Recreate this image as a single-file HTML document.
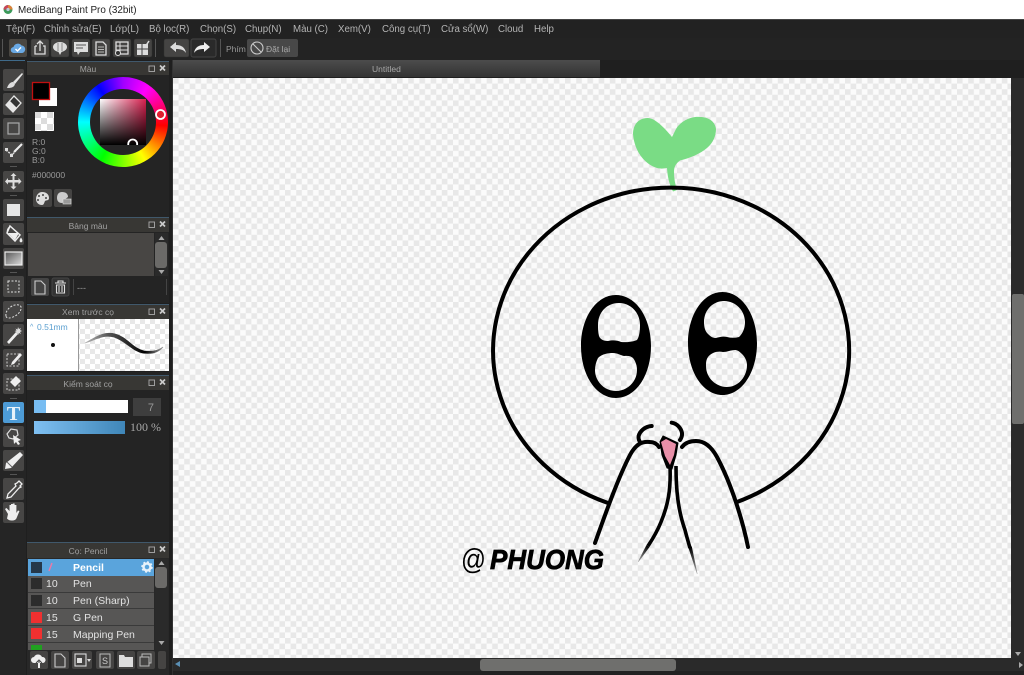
<!DOCTYPE html>
<html><head><meta charset="utf-8"><style>
html,body{margin:0;padding:0;background:#1f1f1f;width:1024px;height:675px;overflow:hidden}
svg{display:block;position:absolute;left:0;top:0}
text{font-family:"Liberation Sans",sans-serif}
.m{font-size:9.7px;fill:#b4b4b4}
.h{font-size:8.500px;fill:#a0a0a0;text-anchor:middle}
.s{font-size:8.500px;fill:#9a9a9a}
.b{fill:#454443;stroke:#333;stroke-width:.5}
.r{font-size:10.500px;fill:#e2e2e2}
.i{fill:#ddd}
.o{fill:none;stroke:#ddd;stroke-width:1.300}
.k{fill:none;stroke:#000;stroke-width:4;stroke-linecap:round;stroke-linejoin:round}
</style></head><body>
<svg width="1024" height="675" viewBox="0 0 1024 675" xmlns="http://www.w3.org/2000/svg">
<defs>
<pattern id="ch" width="11.200" height="11.200" patternUnits="userSpaceOnUse" x="173" y="78">
<rect width="11.200" height="11.200" fill="#fbfbfb"/><rect width="5.600" height="5.600" fill="#e8e8e8"/><rect x="5.600" y="5.600" width="5.600" height="5.600" fill="#e8e8e8"/></pattern>
<pattern id="c2" width="10" height="10" patternUnits="userSpaceOnUse" x="80" y="319">
<rect width="10" height="10" fill="#fff"/><rect width="5" height="5" fill="#e8e8e8"/><rect x="5" y="5" width="5" height="5" fill="#e8e8e8"/></pattern>
<pattern id="c3" width="12" height="12" patternUnits="userSpaceOnUse" x="35" y="112">
<rect width="12" height="12" fill="#fff"/><rect width="6" height="6" fill="#dcdcdc"/><rect x="6" y="6" width="6" height="6" fill="#dcdcdc"/></pattern>
<linearGradient id="tab" x1="0" y1="0" x2="0" y2="1"><stop offset="0" stop-color="#4c4c4c"/><stop offset="1" stop-color="#333"/></linearGradient>
<linearGradient id="sl" x1="0" y1="0" x2="1" y2="0"><stop offset="0" stop-color="#7fc0f2"/><stop offset="1" stop-color="#3f86b8"/></linearGradient>
<linearGradient id="sw" x1="0" y1="0" x2="1" y2="0"><stop offset="0" stop-color="#fff"/><stop offset="1" stop-color="#d8204f"/></linearGradient>
<linearGradient id="sb" x1="0" y1="0" x2="0" y2="1"><stop offset="0" stop-color="#000" stop-opacity="0"/><stop offset="1" stop-color="#000"/></linearGradient>
<linearGradient id="gr" x1="0" y1="0" x2="1" y2="1"><stop offset="0" stop-color="#555"/><stop offset="1" stop-color="#ddd"/></linearGradient>
<linearGradient id="t1" gradientUnits="userSpaceOnUse" x1="648" y1="546" x2="638" y2="562"><stop offset="0" stop-color="#000"/><stop offset="1" stop-color="#aaa"/></linearGradient>
<linearGradient id="t2" gradientUnits="userSpaceOnUse" x1="690" y1="548" x2="697" y2="574"><stop offset="0" stop-color="#000"/><stop offset="1" stop-color="#aaa"/></linearGradient>
<linearGradient id="br" gradientUnits="userSpaceOnUse" x1="84" y1="0" x2="165" y2="0"><stop offset="0" stop-color="#bbb"/><stop offset=".3" stop-color="#555"/><stop offset=".75" stop-color="#000"/><stop offset="1" stop-color="#aaa"/></linearGradient>
<clipPath id="sq"><rect x="100" y="99" width="46" height="46"/></clipPath>
</defs>

<!-- base -->
<rect width="1024" height="675" fill="#1f1f1f"/>
<rect width="1024" height="19" fill="#fff"/>
<circle cx="8" cy="9.500" r="4.500" fill="#3c9a5a"/><path d="M8 5a4.500 4.500 0 0 1 4.500 4.500H8z" fill="#e0803a"/><path d="M3.500 9.500A4.500 4.500 0 0 1 8 5v4.500z" fill="#c9455a"/><circle cx="8" cy="9.500" r="1.600" fill="#bcd"/>
<text x="18" y="13" font-size="9.900" fill="#222">MediBang Paint Pro (32bit)</text>

<!-- menu -->
<rect y="19" width="1024" height="19" fill="#222"/>
<rect y="19" width="1024" height="1" fill="#444"/>
<text class="m" x="6" y="32">Tệp(F)</text>
<text class="m" x="44" y="32">Chỉnh sửa(E)</text>
<text class="m" x="110" y="32">Lớp(L)</text>
<text class="m" x="149" y="32">Bộ lọc(R)</text>
<text class="m" x="200" y="32">Chọn(S)</text>
<text class="m" x="245" y="32">Chụp(N)</text>
<text class="m" x="293" y="32">Màu (C)</text>
<text class="m" x="338" y="32">Xem(V)</text>
<text class="m" x="382" y="32">Công cụ(T)</text>
<text class="m" x="441" y="32">Cửa sổ(W)</text>
<text class="m" x="498" y="32">Cloud</text>
<text class="m" x="534" y="32">Help</text>

<!-- toolbar -->
<rect y="38" width="1024" height="22" fill="#232323"/>
<rect x="2" y="39" width="1" height="18" fill="#555"/>
<rect x="9" y="39" width="18" height="18" rx="2" fill="#4a4742"/>
<rect x="31" y="39" width="18" height="18" rx="2" class="b"/>
<rect x="51" y="39" width="18" height="18" rx="2" class="b"/>
<rect x="72" y="39" width="18" height="18" rx="2" class="b"/>
<rect x="92" y="39" width="18" height="18" rx="2" class="b"/>
<rect x="113" y="39" width="18" height="18" rx="2" class="b"/>
<rect x="134" y="39" width="18" height="18" rx="2" class="b"/>
<rect x="155" y="39" width="1" height="18" fill="#555"/>
<rect x="164" y="39" width="25" height="18" rx="2" class="b"/>
<rect x="191" y="39" width="25" height="18" rx="2" fill="#2a2a2a" stroke="#444"/>
<rect x="220" y="39" width="1" height="18" fill="#555"/>
<text x="226" y="52" font-size="8.500" fill="#999">Phím</text>
<rect x="247" y="39" width="51" height="18" rx="2" fill="#484848"/>
<circle cx="257" cy="48" r="6" fill="none" stroke="#ccc" stroke-width="1.100"/><path d="M253 44l8 8" stroke="#ccc" stroke-width="1.100"/>
<text x="266" y="52" font-size="8.500" fill="#aaa">Đặt lại</text>
<!-- cloud -->
<path d="M14 53a3 3 0 0 1-.5-6 4.500 4.500 0 0 1 8-1.500 3.800 3.800 0 0 1 .8 7.500z" fill="#6aa9e4"/><path d="M15.500 49l2 2 3.500-3.600" fill="none" stroke="#fff" stroke-width="1.400"/>
<!-- share -->
<path d="M35 46v8h10v-8h-2M35 46h2" class="o"/><path d="M40 51v-9M37 44l3-3 3 3" class="o"/>
<!-- balloon -->
<ellipse cx="60" cy="47" rx="7" ry="5" class="i"/><path d="M58 51l2 4 2-4z" class="i"/><path d="M58 43v8M62 43v8" stroke="#666" stroke-width=".7"/>
<!-- comment -->
<path d="M74 42h14v10h-8l-2 3-1-3h-3z" class="i"/><path d="M76 45h10M76 48h7" stroke="#555"/>
<!-- page -->
<path d="M96 42h7l3 3v10H96z" class="o"/><path d="M98 47h6M98 49.500h6M98 52h6" stroke="#ddd" stroke-width=".8"/>
<!-- list -->
<rect x="116" y="42" width="12" height="12" class="o"/><path d="M116 46h12M116 50h12M120 42v12" stroke="#ddd"/>
<circle cx="118" cy="53" r="2.500" fill="#333" stroke="#ddd"/>
<!-- table check -->
<rect x="137" y="44" width="11" height="11" class="i"/><path d="M137 49h11M142 44v11" stroke="#444"/><path d="M145 47l4-6" stroke="#ddd" stroke-width="1.500"/>
<!-- undo redo -->
<path d="M170 47l6-5v3c5 0 9 2 10 8-2-3-5-4-10-4v3z" fill="#ddd"/>
<path d="M210 47l-6-5v3c-5 0-9 2-10 8 2-3 5-4 10-4v3z" fill="#eee"/>

<!-- tab bar -->
<rect x="173" y="60" width="427" height="17" fill="url(#tab)"/>
<text x="372" y="72" font-size="8.500" fill="#a8a8a8">Untitled</text>
<rect x="0" y="60" width="25" height="1" fill="#3f6a8a"/>

<!-- canvas -->
<rect x="173" y="78" width="838" height="580" fill="url(#ch)"/>
<rect x="172" y="60" width="1" height="615" fill="#333"/>

<!-- artwork -->
<path d="M672 137C667 131 656 118 648 118C638 118 633 125 633 134C634 148 642 163 657 168C661 169 664 168.500 667 168C667.500 176 669 184 673 191.500L677 190C675 184 674 178 674 172C674 168 675 164 680 160.500C690 158 700 154 707 148C713 143 716 136 716 129C715 121 708 117 700 117C690 116 680 122 676 129Z" fill="#7adc85"/>
<path class="k" d="M608 503A178 163 0 1 1 737 502"/>
<path fill-rule="evenodd" d="M616 295C636 295 651 318 651 346C651 375 636 398 616 398C596 398 581 375 581 346C581 318 596 295 616 295ZM619 303C607 303 598 312 598 325C598 329 598 332 599 336C600 339 603 341 608 341C612 340 617 340 621 342C626 342.500 632 342 637 340C639 337 640 332 640 325C640 313 631 303 619 303ZM598 358C596 362 595 366 595 370C595 381 604 391 616 391C627 391 637 382 637 370C637 366 636 362 633 358C631 356 628 355.500 624 356C620 355 617 353 613 353C608 353 602 354 598 358Z" fill="#000"/>
<path fill-rule="evenodd" d="M722.500 292C742 292 757 315 757 343C757 372 742 395 722.500 395C703 395 688 372 688 343C688 315 703 292 722.500 292ZM724 301C713 301 704 310 704 322C704 327 705 331 708 334C711 337 713 338 716 338C719 337 723 336 727 337C731 338 735 338 739 337C743 333 745 328 745 322C745 311 736 301 724 301ZM708 357C706 360 706 363 706 366C706 378 716 387 727 387C738 387 747 377 747 365C747 361 745 357 742 354C739 351 737 350 735 350C731 350 727 352 723 352C718 351 712 352 708 357Z" fill="#000"/>
<path d="M595 543C605 515 618 478 630 455C636 444 642 441 650 442C654 442 657 444 659 447" class="k"/>
<path d="M748 547C743 522 732 485 717 457C711 446 704 441 696 441C689 441 685 443 682 447" class="k"/>
<path d="M670 466C671 490 668 505 661 522C657 532 652 540 648 546" fill="none" stroke="#000" stroke-width="3.600"/>
<path d="M646.500 545L649.500 547L638.500 562L638 561.500Z" fill="url(#t1)"/>
<path d="M676 466C676 490 678 510 685 530C686.500 536 688 541 690 548" fill="none" stroke="#000" stroke-width="3.600"/>
<path d="M688.200 547L691.800 546.500L697.500 574L697 574Z" fill="url(#t2)"/>
<path d="M651.700 426C645 426.500 640 431 638.600 436C638.300 439 639 441 640.700 442.700M671.700 422.700C677 423.500 681 428 682 433C682.300 436 681.500 438 680 440" class="k" stroke-width="3"/>
<path d="M660 441.700L663 436L678 443L676 455L672 469L667 468L662 455Z" fill="#000" stroke="#000" stroke-linejoin="round"/>
<path d="M661 442L666 439L676 444L674 455L670 465L665 456Z" fill="#e88fa8"/>
<text x="461" y="569" font-size="29" fill="#000" textLength="25" lengthAdjust="spacingAndGlyphs">@</text>
<text x="490" y="569" font-size="28" font-weight="bold" font-style="italic" fill="#000" stroke="#000" stroke-width=".8" textLength="114" lengthAdjust="spacingAndGlyphs">PHUONG</text>

<!-- canvas scrollbars -->
<rect x="1011" y="78" width="13" height="597" fill="#2b2b2b"/>
<rect x="1012" y="294" width="12" height="130" rx="2" fill="#6f6f6d"/>
<rect x="173" y="658" width="851" height="13" fill="#2a2a2a"/>
<rect x="173" y="671" width="851" height="4" fill="#222"/>
<rect x="480" y="659" width="196" height="12" rx="3" fill="#6f6f6d"/>
<path d="M175 664l5-3v6z" fill="#5a8fb4"/><path d="M1015 652h6l-3 4z" fill="#aaa"/><path d="M1019 662l4 3-4 3z" fill="#aaa"/>

<!-- left tools -->
<rect x="0" y="61" width="26" height="614" fill="#252525"/>
<g fill="#474645">
<rect x="3" y="69" width="21" height="22" rx="2"/><rect x="3" y="93" width="21" height="22" rx="2"/><rect x="3" y="118" width="21" height="21" rx="2"/><rect x="3" y="142" width="21" height="21" rx="2"/><rect x="3" y="171" width="21" height="21" rx="2"/><rect x="3" y="199" width="21" height="22" rx="2"/><rect x="3" y="223" width="21" height="22" rx="2"/><rect x="3" y="248" width="21" height="21" rx="2"/><rect x="3" y="276" width="21" height="21" rx="2"/><rect x="3" y="301" width="21" height="21" rx="2"/><rect x="3" y="324" width="21" height="22" rx="2"/><rect x="3" y="349" width="21" height="21" rx="2"/><rect x="3" y="373" width="21" height="21" rx="2"/><rect x="3" y="426" width="21" height="21" rx="2"/><rect x="3" y="450" width="21" height="21" rx="2"/><rect x="3" y="478" width="21" height="22" rx="2"/><rect x="3" y="502" width="21" height="21" rx="2"/>
</g>
<rect x="3" y="402" width="21" height="21" rx="2" fill="#4d9bd6"/>
<g fill="#555"><rect x="10" y="166" width="7" height="1"/><rect x="10" y="195" width="7" height="1"/><rect x="10" y="272" width="7" height="1"/><rect x="10" y="398" width="7" height="1"/><rect x="10" y="474" width="7" height="1"/></g>
<!-- brush -->
<path d="M22 73l-9 9 2 2 8-10z" fill="#e6e6e6"/><path d="M13 82c-3 0-5 3-6 6 3 0 7 0 8-4z" fill="#ddd"/>
<!-- eraser -->
<path d="M14 96l7 7-8 9-7-7z" fill="#333" stroke="#e6e6e6" stroke-width="1.300"/><path d="M6 105l4-4 7 7-4 4z" fill="#e6e6e6"/>
<!-- square -->
<rect x="8" y="123" width="11" height="11" fill="none" stroke="#aaa" stroke-width="1.200"/>
<!-- line -->
<path d="M6 150l6 5 9-10" fill="none" stroke="#ddd" stroke-width="1.500" stroke-dasharray="2 1"/><path d="M14 152l8-8" stroke="#eee" stroke-width="2"/><rect x="5" y="148" width="3" height="3" class="i"/><rect x="10" y="154" width="3" height="3" class="i"/>
<!-- move -->
<path d="M13.500 173l3 3h-2v4h4v-2l3 3.500-3 3v-2h-4v4h2l-3 3-3-3h2v-4H8v2l-3-3 3-3.500v2h4.500v-4h-2z" fill="#ddd"/>
<!-- fill rect -->
<rect x="7" y="204" width="13" height="12" fill="#e6e6e6"/>
<!-- bucket -->
<path d="M10 226l10 9-5 6-8-8z" fill="none" stroke="#eee" stroke-width="1.500"/><path d="M8 233h11l-4 7z" fill="#eee"/><path d="M21 238c1.500 2 1.500 4 0 4s-1.500-2 0-4zM7 232c0-3 1-5 4-6" fill="#eee" stroke="#eee" stroke-width=".6"/>
<!-- gradient -->
<rect x="5" y="252" width="17" height="13" fill="url(#gr)" stroke="#eee" stroke-width="1.200"/>
<!-- marquee -->
<rect x="8" y="281" width="11" height="11" fill="none" stroke="#ddd" stroke-dasharray="2 1.500"/>
<!-- lasso -->
<path d="M6 316c-1-5 4-10 9-11 4-1 7 1 6 4-1 5-8 9-12 9-2 0-3-1-3-2z" fill="none" stroke="#ddd" stroke-dasharray="2 1.500"/>
<!-- wand -->
<path d="M7 342l9-10 2 2-9 10z" fill="#eee"/><path d="M18 327l1 2 2-1-1 2 2 1-2 1 1 2-2-1-1 2-.5-2-2 1 1-2-2-1 2-.5-1-2 2 1z" fill="#ddd"/>
<!-- select pen -->
<rect x="7" y="354" width="12" height="12" fill="none" stroke="#ccc" stroke-dasharray="2 1.500"/><path d="M12 362l8-9 2 2-8 9-3 1z" fill="#eee"/>
<!-- select eraser -->
<rect x="7" y="379" width="12" height="11" fill="none" stroke="#ccc" stroke-dasharray="2 1.500"/><path d="M16 376l5 5-6 6-5-5z" fill="#eee"/>
<!-- T -->
<text x="13.500" y="420" font-size="20" font-weight="bold" fill="#e8f2fa" text-anchor="middle" style="font-family:'Liberation Serif',serif">T</text>
<!-- polygon select -->
<path d="M7 434l4-5 6 1 1 5-5 4-4-1z" fill="none" stroke="#ddd" stroke-width="1.200"/><path d="M13 435l8 5-3 1 2 3-2 1-2-3-2 2z" fill="#eee"/>
<!-- correction pen -->
<path d="M20 452l3 3-12 13-6 1 1-6z" fill="#eee"/><path d="M7 462l5 5" stroke="#666"/>
<!-- dropper -->
<path d="M19 481l3 3-2 2 1 1-2 1-8 9-4 1 1-4 8-8-1-2 2-1z" fill="none" stroke="#eee" stroke-width="1.300"/>
<!-- hand -->
<path d="M8 514l-3-5 1.500-1 3 3V505h1.500v5V504h1.800v6-6.500h1.800v7-5.500h1.800v8l1.500-2.500 1.600.5-2.500 6c-1 3-2.500 3.500-5 3.500-2.500 0-3.500-.5-5-2z" fill="#eee"/>

<!-- panel Mau -->
<rect x="27" y="61" width="142" height="156" fill="#242424"/>
<rect x="27" y="62" width="142" height="13" fill="#383734"/>
<rect x="27" y="61" width="142" height="1" fill="#40586b"/>
<text class="h" x="88" y="72">Màu</text>
<g id="pi"><rect x="149" y="66" width="5.500" height="5.500" fill="none" stroke="#aaa" stroke-width=".9"/><path d="M160 65.500l5 5M165 65.500l-5 5" stroke="#ccc" stroke-width="1.700"/></g>
<rect x="39" y="88" width="18" height="18" fill="#fff"/>
<rect x="32.500" y="82.500" width="17" height="17" fill="#000" stroke="#c01010" stroke-width="1.300"/>
<rect x="35" y="112" width="19" height="19" fill="url(#c3)"/>
<text class="s" x="32" y="145">R:0</text><text class="s" x="32" y="154">G:0</text><text class="s" x="32" y="163">B:0</text>
<text class="s" x="32" y="178">#000000</text>
<foreignObject x="78" y="77" width="90" height="90"><div xmlns="http://www.w3.org/1999/xhtml" style="width:90px;height:90px;border-radius:50%;background:conic-gradient(#a000ff 0deg,#ff00ff 35deg,#ff0040 80deg,#ff0000 95deg,#ffff00 150deg,#00ff00 210deg,#00ffff 270deg,#0000ff 325deg,#a000ff 360deg)"></div></foreignObject>
<circle cx="123" cy="122" r="33" fill="#242424"/>
<rect x="100" y="99" width="46" height="46" fill="url(#sw)"/>
<rect x="100" y="99" width="46" height="46" fill="url(#sb)"/>
<circle cx="132.700" cy="144" r="4.500" fill="none" stroke="#fff" stroke-width="1.800" clip-path="url(#sq)"/>
<circle cx="160.500" cy="114.500" r="4.500" fill="#e02030" stroke="#fff" stroke-width="1.800"/>
<rect x="33" y="189" width="19" height="18" rx="2" fill="#454443"/><rect x="54" y="189" width="18" height="18" rx="2" fill="#454443"/>
<path d="M42 192c5 0 7 3 7 6 0 3-3 2-4 3-1 2-1 4-3 4-4 0-6-3-6-6 0-4 3-7 6-7z" fill="#ddd"/><circle cx="39" cy="196" r="1" fill="#444"/><circle cx="43" cy="195" r="1" fill="#444"/><circle cx="46" cy="198" r="1" fill="#444"/><circle cx="38" cy="200" r="1" fill="#444"/>
<path d="M62 192c4 0 6 2 6 5l-4 3c-1 2-1 3-2 3-4 0-5-3-5-5 0-4 2-6 5-6z" fill="#ccc"/><rect x="63" y="199" width="8" height="5" fill="#999" stroke="#ddd" stroke-width=".6"/>

<!-- panel Bang mau -->
<rect x="27" y="218" width="142" height="85" fill="#242424"/>
<rect x="27" y="218" width="142" height="14" fill="#383734"/>
<rect x="27" y="217" width="142" height="1" fill="#40586b"/>
<text class="h" x="88" y="229">Bảng màu</text>
<use href="#pi" y="156"/>
<rect x="28" y="233" width="126" height="43" fill="#484644"/>
<rect x="155" y="233" width="13" height="43" fill="#2a2a2a"/>
<rect x="155" y="242" width="12" height="26" rx="3" fill="#6b6a68"/>
<path d="M158.500 240l3-4 3 4zM158.500 270l3 4 3-4z" fill="#aaa"/>
<rect x="31" y="278" width="18" height="18" rx="2" fill="#444"/><rect x="52" y="278" width="17" height="18" rx="2" fill="#333" stroke="#444"/>
<path d="M35 281h6l4 4v9H35z" fill="none" stroke="#ccc" stroke-width="1.100"/>
<path d="M55 283h11M58 283v-2h5v2M56.500 285h8v8h-8zM59 286v6M62 286v6" fill="none" stroke="#ddd" stroke-width="1.100"/>
<rect x="73" y="279" width="1" height="16" fill="#444"/>
<text x="77" y="291" font-size="9" fill="#999">---</text>
<rect x="166" y="279" width="1" height="16" fill="#444"/>

<!-- Preview -->
<rect x="27" y="304" width="142" height="15" fill="#383734"/>
<rect x="27" y="304" width="142" height="1" fill="#40586b"/>
<text class="h" x="88" y="315">Xem trước cọ</text>
<use href="#pi" y="243"/>
<rect x="27" y="319" width="51" height="52" fill="#fff"/>
<rect x="78" y="319" width="1" height="52" fill="#999"/>
<rect x="79" y="319" width="90" height="52" fill="url(#c2)"/>
<text x="30" y="329" font-size="7" fill="#5a9fd0">^</text>
<text x="37" y="330" font-size="8.500" fill="#5a9fd0">0.51mm</text>
<circle cx="53" cy="345" r="2" fill="#111"/>
<path d="M85 343C95 338 103 331 115 334C127 337 133 349 144 351C152 352 158 351 163 347C158 353 150 354 143 353C132 351 126 341 114 337C103 334 95 340 85 343Z" fill="url(#br)" stroke="url(#br)" stroke-width=".8"/>

<!-- Brush control -->
<rect x="27" y="372" width="142" height="170" fill="#242424"/>
<rect x="27" y="376" width="142" height="14" fill="#383734"/>
<rect x="27" y="375" width="142" height="1" fill="#40586b"/>
<text class="h" x="88" y="387">Kiểm soát cọ</text>
<use href="#pi" y="314"/>
<rect x="34" y="400" width="94" height="13" fill="#fff"/>
<rect x="34" y="400" width="12" height="13" fill="#78bdf2"/>
<rect x="133" y="398" width="28" height="18" fill="#3e3e3e"/>
<text x="154" y="411" font-size="11" fill="#999" text-anchor="end">7</text>
<rect x="34" y="421" width="91" height="13" fill="url(#sl)"/>
<text x="130" y="431" font-size="12" fill="#a8a8a8" style="font-family:'Liberation Serif',serif">100 %</text>

<!-- Brush panel -->
<rect x="27" y="543" width="142" height="132" fill="#282828"/>
<rect x="27" y="543" width="142" height="15" fill="#383734"/>
<rect x="27" y="542" width="142" height="1" fill="#40586b"/>
<text class="h" x="88" y="554">Cọ: Pencil</text>
<use href="#pi" y="481"/>
<rect x="28" y="559" width="126" height="91" fill="#575655"/>
<rect x="28" y="559" width="126" height="17" fill="#5aa4dc"/>
<g fill="#3a3a3a"><rect x="28" y="592" width="126" height="1"/><rect x="28" y="608" width="126" height="1"/><rect x="28" y="625" width="126" height="1"/><rect x="28" y="642" width="126" height="1"/></g>
<rect x="31" y="562" width="11" height="11" fill="#25384a"/>
<rect x="31" y="578" width="11" height="11" fill="#2c2c2c"/>
<rect x="31" y="595" width="11" height="11" fill="#2c2c2c"/>
<rect x="31" y="612" width="11" height="11" fill="#f03030"/>
<rect x="31" y="628" width="11" height="11" fill="#f03030"/>
<rect x="31" y="645" width="11" height="5" fill="#20a020"/>
<path d="M49 571l3-8" stroke="#e87aa8" stroke-width="1.500"/>
<text x="73" y="571" font-size="10.500" font-weight="bold" fill="#fff">Pencil</text>
<text class="r" x="46" y="587">10</text><text class="r" x="73" y="587">Pen</text>
<text class="r" x="46" y="604">10</text><text class="r" x="73" y="604">Pen (Sharp)</text>
<text class="r" x="46" y="621">15</text><text class="r" x="73" y="621">G Pen</text>
<text class="r" x="46" y="638">15</text><text class="r" x="73" y="638">Mapping Pen</text>
<circle cx="147" cy="567" r="3.500" fill="none" stroke="#e8f2fa" stroke-width="2.500"/><circle cx="147" cy="567" r="5" fill="none" stroke="#e8f2fa" stroke-width="1.500" stroke-dasharray="2 1.900"/>
<rect x="155" y="559" width="13" height="91" fill="#2a2a2a"/>
<rect x="155" y="567" width="12" height="21" rx="3" fill="#6b6a68"/>
<path d="M158.500 565l3-4 3 4zM158.500 641l3 4 3-4z" fill="#aaa"/>
<g fill="#454443"><rect x="30" y="651" width="18" height="18" rx="2"/><rect x="51" y="651" width="18" height="18" rx="2"/><rect x="72" y="651" width="20" height="18" rx="2"/><rect x="96" y="651" width="18" height="18" rx="2"/><rect x="117" y="651" width="18" height="18" rx="2"/><rect x="137" y="651" width="18" height="18" rx="2"/><rect x="158" y="651" width="8" height="18" rx="2"/></g>
<path d="M34 663a3 3 0 0 1 0-6 4.500 4.500 0 0 1 8 0 3 3 0 0 1 1 6z" fill="#eee"/><path d="M39 668v-7M36 663l3-3 3 3" stroke="#444" fill="none"/><path d="M39 668v-5" stroke="#eee" stroke-width="2"/>
<path d="M55 654h6l4 4v9H55z" fill="none" stroke="#ccc" stroke-width="1.100"/>
<rect x="75" y="654" width="11" height="12" fill="none" stroke="#ddd" stroke-width="1.100"/><rect x="77" y="658" width="5" height="5" fill="#ddd"/><path d="M87 659h4l-2 3z" fill="#ddd"/>
<rect x="100" y="654" width="10" height="13" fill="none" stroke="#bbb"/><text x="105" y="664" font-size="9" fill="#ccc" text-anchor="middle">S</text>
<path d="M119 655h5l1 2h8v10h-14z" fill="#ddd"/>
<rect x="142" y="654" width="9" height="9" fill="none" stroke="#bbb"/><rect x="140" y="657" width="9" height="9" fill="#454443" stroke="#bbb"/>
</svg>
</body></html>
